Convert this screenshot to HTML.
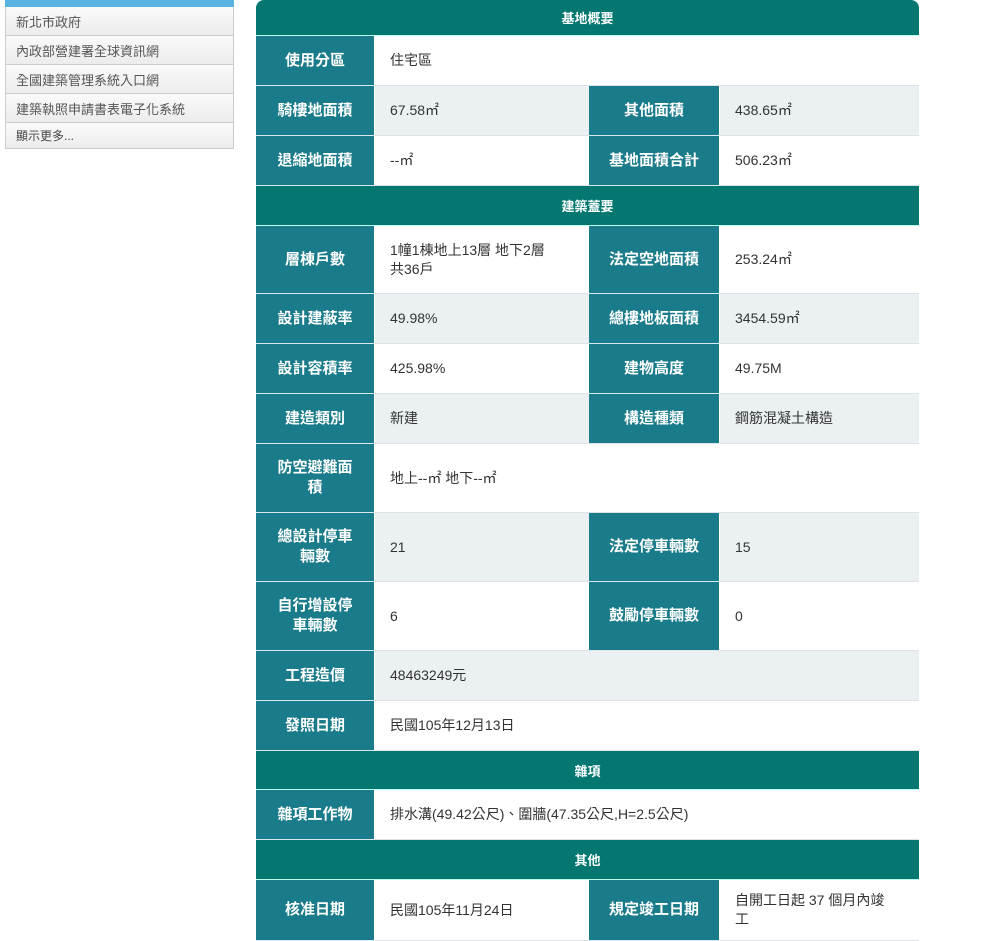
<!DOCTYPE html><html><head><meta charset="utf-8"><style>
body{margin:0;width:1001px;height:941px;background:#fff;position:relative;overflow:hidden;font-family:"Liberation Sans","Noto Sans CJK TC",sans-serif;}
.side{position:absolute;left:5px;width:229px;border:1px solid #ccc;border-top:none;background:linear-gradient(#fafafa,#ececec);font-size:13px;color:#555;box-sizing:border-box;padding-left:10px;display:flex;align-items:center}
.c{position:absolute;box-sizing:border-box;display:flex;align-items:center;font-size:14px;color:#333}
.h{background:#037770;color:#fff;font-weight:bold;font-size:13px;justify-content:center;left:256px;width:663px;border-bottom:1px solid #bfe;}
.l{background:#1a7b8b;color:#fff;font-weight:bold;font-size:15px;justify-content:center;text-align:center;line-height:20px;padding:0 19px;border-bottom:1px solid #d8e8ec;border-right:1px solid #fff}
.v{padding-left:15px;line-height:19px;border-bottom:1px solid #dde3e5}
.g{background:#ebf1f3}
</style></head><body>
<div style="position:absolute;left:5px;top:0;width:229px;height:7px;background:#5ab4e3;border-bottom:1px solid #3a8fc0"></div>
<div class="side" style="top:7px;height:29px">新北市政府</div>
<div class="side" style="top:36px;height:29px">內政部營建署全球資訊網</div>
<div class="side" style="top:65px;height:29px">全國建築管理系統入口網</div>
<div class="side" style="top:94px;height:29px">建築執照申請書表電子化系統</div>
<div class="side" style="top:123px;height:26px;font-size:12px;color:#444">顯示更多...</div>
<div id="t"></div>
<script>
var H=[[0,36,'基地概要',1],[186,226,'建築蓋要'],[751,790,'雜項'],[840,880,'其他']];
var R=[[36,86,'使用分區','住宅區'],[86,136,'騎樓地面積','67.58㎡','其他面積','438.65㎡',1],[136,186,'退縮地面積','--㎡','基地面積合計','506.23㎡'],
[226,294,'層棟戶數','1幢1棟地上13層 地下2層<br>共36戶','法定空地面積','253.24㎡'],[294,344,'設計建蔽率','49.98%','總樓地板面積','3454.59㎡',1],
[344,394,'設計容積率','425.98%','建物高度','49.75M'],[394,444,'建造類別','新建','構造種類','鋼筋混凝土構造',1],[444,513,'防空避難面積','地上--㎡ 地下--㎡'],
[513,582,'總設計停車輛數','21','法定停車輛數','15',1],[582,651,'自行增設停車輛數','6','鼓勵停車輛數','0'],[651,701,'工程造價','48463249元',null,null,1],
[701,751,'發照日期','民國105年12月13日'],[790,840,'雜項工作物','排水溝(49.42公尺)、圍牆(47.35公尺,H=2.5公尺)'],[880,941,'核准日期','民國105年11月24日','規定竣工日期','自開工日起 37 個月內竣<br>工']];
var s='';
H.forEach(function(h){s+='<div class="c h" style="top:'+h[0]+'px;height:'+(h[1]-h[0])+'px;'+(h[3]?'border-radius:8px 8px 0 0':'')+'">'+h[2]+'</div>'});
R.forEach(function(r){var t=r[0],hh=r[1]-r[0],g=r[6]?' g':'';
s+='<div class="c l" style="left:256px;width:119px;top:'+t+'px;height:'+hh+'px">'+r[2]+'</div>';
if(r[4]){s+='<div class="c v'+g+'" style="left:375px;width:214px;top:'+t+'px;height:'+hh+'px">'+r[3]+'</div>';
s+='<div class="c l" style="left:589px;width:131px;top:'+t+'px;height:'+hh+'px;padding:0 8px">'+r[4]+'</div>';
s+='<div class="c v'+g+'" style="left:720px;width:199px;top:'+t+'px;height:'+hh+'px">'+r[5]+'</div>';}
else s+='<div class="c v'+g+'" style="left:375px;width:544px;top:'+t+'px;height:'+hh+'px">'+r[3]+'</div>';});
document.getElementById('t').innerHTML=s;
</script>
</body></html>
